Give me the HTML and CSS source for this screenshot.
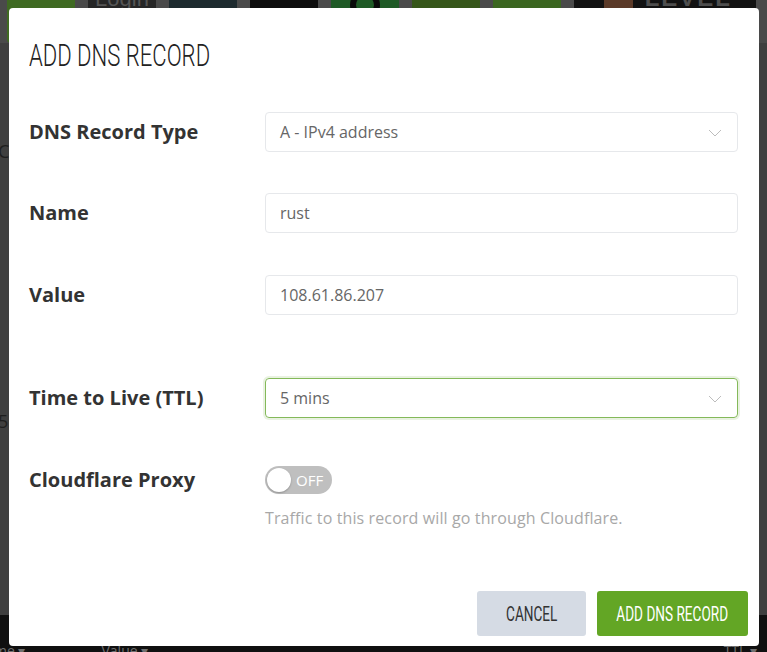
FILE: index.html
```html
<!DOCTYPE html>
<html>
<head>
<meta charset="utf-8">
<link rel="stylesheet" href="styles.css">
</head>
<body>
<div class="page">
  <div class="tiles">
    <div class="tile t-green1"></div>
    <div class="tile t-dark"><span class="tile-word">Login</span></div>
    <div class="tile t-gold"></div>
    <div class="tile t-black"></div>
    <div class="tile t-green2"><span class="ring"></span></div>
    <div class="tile t-green3"></div>
    <div class="tile t-green4"></div>
    <div class="tile t-wide"><span class="avatar"></span><span class="tile-word big">LEVEL 3</span></div>
  </div>
  <div class="page-body">
    <div class="bg-text first">C</div>
    <div class="bg-text second">5 m</div>
  </div>
  <div class="table-head">
    <span class="th th-name">me ▾</span>
    <span class="th th-value">Value ▾</span>
    <span class="th th-ttl">TTL ▾</span>
  </div>
</div>

<div class="overlay">
  <div class="modal">
    <h1 class="modal-title"><span class="cond light">ADD DNS RECORD</span></h1>
    <div class="form">
      <div class="row r1">
        <label class="label">DNS Record Type</label>
        <div class="field select">
          <span class="value">A - IPv4 address</span>
          <svg class="chev" width="14" height="8" viewBox="0 0 14 8"><path d="M1 1 L7 7 L13 1" fill="none" stroke="#bdbdbd" stroke-width="1"/></svg>
        </div>
      </div>
      <div class="row r2">
        <label class="label">Name</label>
        <div class="field"><span class="value">rust</span></div>
      </div>
      <div class="row r3">
        <label class="label">Value</label>
        <div class="field"><span class="value">108.61.86.207</span></div>
      </div>
      <div class="row r4">
        <label class="label">Time to Live (TTL)</label>
        <div class="field select focused">
          <span class="value">5 mins</span>
          <svg class="chev" width="14" height="8" viewBox="0 0 14 8"><path d="M1 1 L7 7 L13 1" fill="none" stroke="#bdbdbd" stroke-width="1"/></svg>
        </div>
      </div>
      <div class="row r5">
        <label class="label">Cloudflare Proxy</label>
        <div class="toggle-wrap">
          <div class="toggle"><span class="knob"></span><span class="toggle-text">OFF</span></div>
        </div>
      </div>
      <div class="help">Traffic to this record will go through Cloudflare.</div>
    </div>
    <div class="footer">
      <button class="btn btn-cancel"><span class="cond">CANCEL</span></button>
      <button class="btn btn-add"><span class="cond">ADD DNS RECORD</span></button>
    </div>
  </div>
</div>
</body>
</html>
```

FILE: styles.css
```css
* { box-sizing: border-box; }

html, body {
  margin: 0;
  padding: 0;
}

body {
  width: 767px;
  height: 652px;
  overflow: hidden;
  background: #434343;
  font-family: "Open Sans", "Liberation Sans", sans-serif;
  position: relative;
}

/* ---------- dimmed background page ---------- */
.page {
  height: 652px;
  display: flex;
  flex-direction: column;
}

.tiles {
  height: 43px;
  display: flex;
  gap: 13px;
  padding-left: 7px;
  background: #4a4a4a;
  flex: none;
}

.tile {
  width: 68px;
  height: 43px;
  position: relative;
  overflow: hidden;
  display: flex;
  align-items: flex-start;
  justify-content: center;
}

.t-green1 { background: #3f6a22; border-radius: 0 0 0 4px; }
.t-dark { background: #262626; }
.t-gold { background: #1d2a2e; }
.t-black { background: #0d0d0d; }
.t-green2 { background: #1f5a26; }
.t-green3 { background: #36561a; }
.t-green4 { background: #3b6620; }
.t-wide { width: 182px; background: #121212; justify-content: flex-end; padding-right: 18px; gap: 12px; }

.tile-word {
  color: #555;
  font-family: "Liberation Sans", sans-serif;
  font-size: 22px;
  line-height: 22px;
  margin-top: -12px;
}
.tile-word.big { color: #4e4e4e; font-size: 24px; line-height: 24px; font-weight: bold; letter-spacing: 2px; margin-top: -14px; }

.ring {
  width: 30px;
  height: 30px;
  border: 6px solid #0a0a0a;
  border-radius: 50%;
  margin-top: -10px;
}

.avatar {
  width: 34px;
  height: 22px;
  background: #5b3a28;
  border-radius: 0 0 12px 12px;
  margin-right: auto;
  margin-left: 30px;
}

.page-body {
  flex: 1;
  background: #3f3f3f;
  position: relative;
}

.bg-text {
  color: #1e1e1e;
  font-size: 18px;
  line-height: 20px;
  margin-left: -2px;
}
.bg-text.first { margin-top: 98px; }
.bg-text.second { margin-top: 250px; }

.table-head {
  height: 37px;
  flex: none;
  background: #101010;
  position: relative;
  color: #6f6f6f;
  font-size: 14px;
  display: flex;
  align-items: flex-end;
}
.th { line-height: 14px; margin-bottom: -6px; }
.th-name { margin-left: -6px; }
.th-value { margin-left: 76px; }
.th-ttl { margin-left: auto; margin-right: 10px; }

/* ---------- modal ---------- */
.overlay {
  position: absolute;
  left: 0;
  top: 0;
  width: 767px;
  height: 652px;
}

.modal {
  position: absolute;
  left: 9px;
  top: 8px;
  width: 750px;
  height: 638px;
  background: #ffffff;
  border-radius: 4px;
  padding: 26px 21px 10px 20px;
  display: flex;
  flex-direction: column;
}

.cond {
  display: inline-block;
  font-family: "Roboto", "Liberation Sans", sans-serif;
  transform: scaleX(0.68);
  white-space: nowrap;
}

.cond.light { font-weight: 300; transform-origin: left center; transform: scaleX(0.69); }

.modal-title {
  margin: 0;
  font-size: 32px;
  line-height: 40px;
  font-weight: 300;
  color: #222;
}

.form {
  margin-top: 37px;
}

.row {
  display: flex;
  align-items: center;
}

.r1 { margin-bottom: 41px; }
.r2 { margin-bottom: 42px; }
.r3 { margin-bottom: 63px; }
.r4 { margin-bottom: 48px; }

.label {
  width: 236px;
  flex: none;
  font-size: 20px;
  font-weight: 700;
  color: #333;
  line-height: 26px;
}

.field {
  flex: 1;
  height: 40px;
  border: 1px solid #e6e8eb;
  border-radius: 4px;
  display: flex;
  align-items: center;
  padding: 0 15px 0 14px;
  font-size: 16px;
  color: #666;
}

.field .value { flex: 1; }

.field.focused {
  border-color: #84b95a;
  box-shadow: 0 0 0 2px rgba(132, 185, 90, 0.18);
}

.chev { flex: none; margin-top: 1px; }

.toggle-wrap { height: 28px; display: flex; align-items: center; }

.toggle {
  width: 67px;
  height: 28px;
  border-radius: 14px;
  background: #bfbfbf;
  position: relative;
  display: flex;
  align-items: center;
}

.knob {
  position: absolute;
  left: 2px;
  top: 2px;
  width: 24px;
  height: 24px;
  border-radius: 50%;
  background: #fff;
  box-shadow: 0 1px 2px rgba(0,0,0,0.25);
}

.toggle-text {
  margin-left: 31px;
  color: #fff;
  font-size: 15px;
  font-weight: 400;
  line-height: 1;
}

.help {
  margin-top: 13px;
  margin-left: 236px;
  font-size: 16px;
  letter-spacing: 0.12px;
  line-height: 22px;
  color: #a8a8a8;
}

.footer {
  margin-top: auto;
  margin-right: -10px;
  display: flex;
  justify-content: flex-end;
  gap: 11px;
}

.btn {
  height: 45px;
  border: none;
  border-radius: 3px;
  font-size: 20px;
  padding: 0;
  display: flex;
  align-items: center;
  justify-content: center;
  overflow: hidden;
}

.btn-cancel { width: 109px; background: #d5dbe4; color: #333; }
.btn-add { width: 151px; background: #63a625; color: #fff; }
```
